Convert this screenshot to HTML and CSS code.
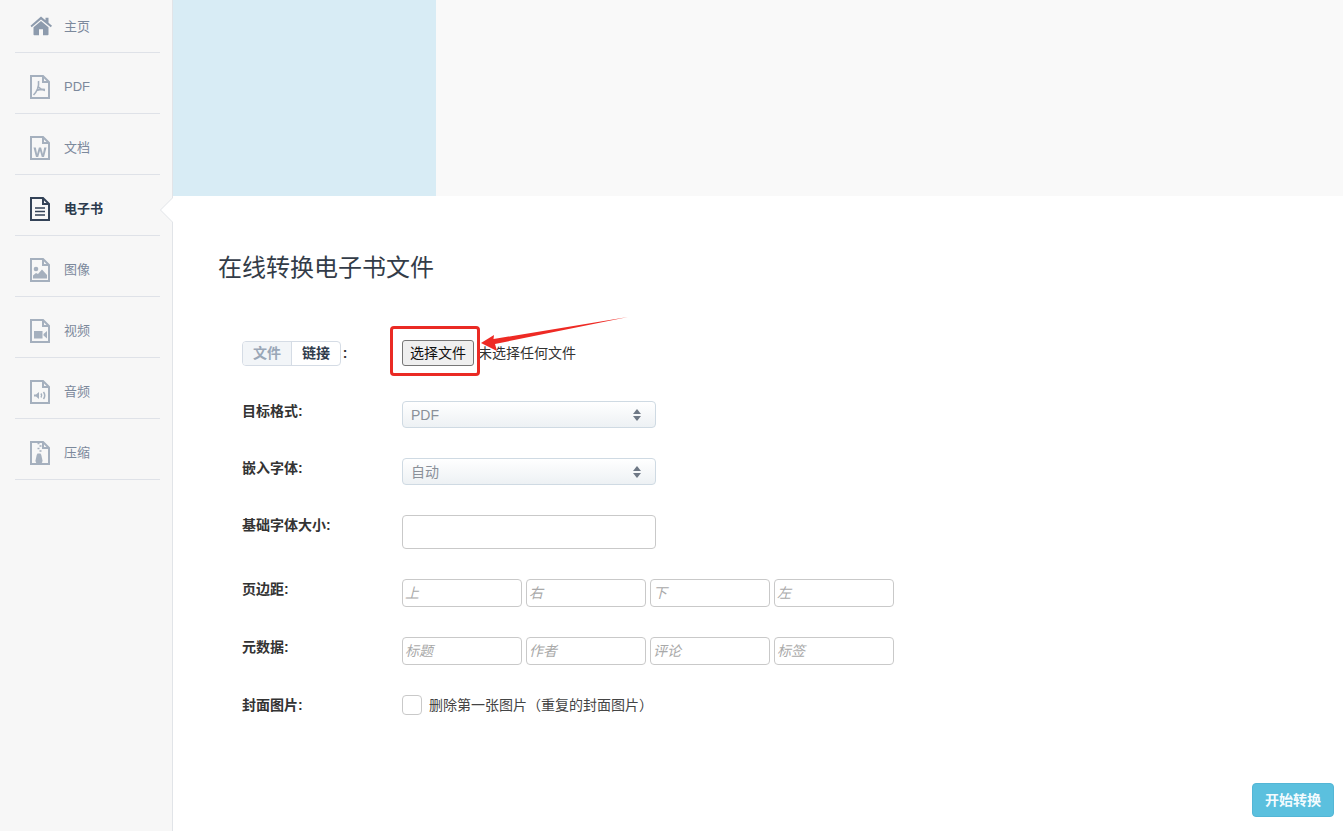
FILE: index.html
```html
<!DOCTYPE html>
<html lang="zh">
<head>
<meta charset="utf-8">
<title>在线转换电子书文件</title>
<link rel="stylesheet" href="styles.css">
</head>
<body>
<div class="app">
  <nav class="sidebar">
    <a class="nav-item nav-first">
      <svg class="nav-icon" viewBox="0 0 22 20" width="22" height="20"><path fill="currentColor" d="M11 0.500 L15.500 4.300V1.800h3v5l3.500 3-1.200 1.400L11 3.500 1.700 11.200 0.500 9.800z M11 5l7.500 6.200V18.500q0 .8-.8.8H13v-6H9v6H4.300q-.8 0-.8-.8V11.200z"/></svg>
      <span class="cjk">主页</span>
    </a>
    <a class="nav-item">
      <svg class="nav-icon" viewBox="0 0 20 24" width="20" height="24"><path class="doc" d="M1 1h12l6 6v16H1z M13 1v6h6"/><path class="line" d="M8.500 6c.5 3 0 5-1 8-1 2.500-2.500 4.500-4 6M8.500 12c1.500 2 3.500 3 6.500 3.500M6.500 15.500c3-1 5.500-1.300 8.500-1"/></svg>
      <span>PDF</span>
    </a>
    <a class="nav-item">
      <svg class="nav-icon" viewBox="0 0 20 24" width="20" height="24"><path class="doc" d="M1 1h12l6 6v16H1z M13 1v6h6"/><path class="fillp" d="M3.500 11.500h2.300l1.300 6.500 1.800-6.500h2.200l1.800 6.500 1.300-6.500h2.300l-2.500 9.500h-2.200l-1.800-6.200-1.800 6.200H6z"/></svg>
      <span class="cjk">文档</span>
    </a>
    <a class="nav-item nav-active">
      <svg class="nav-icon" viewBox="0 0 20 24" width="20" height="24"><path class="doc" d="M1 1h12l6 6v16H1z M13 1v6h6"/><path class="line" d="M5 11h10M5 14.500h10M5 18h10"/></svg>
      <span class="cjk">电子书</span>
    </a>
    <a class="nav-item">
      <svg class="nav-icon" viewBox="0 0 20 24" width="20" height="24"><path class="doc" d="M1 1h12l6 6v16H1z M13 1v6h6"/><circle class="fillp" cx="6" cy="11" r="2.300"/><path class="fillp" d="M3 20.500v-3l3-2.500 2 1 4-4.500 5 5.500v3.500z"/></svg>
      <span class="cjk">图像</span>
    </a>
    <a class="nav-item">
      <svg class="nav-icon" viewBox="0 0 20 24" width="20" height="24"><path class="doc" d="M1 1h12l6 6v16H1z M13 1v6h6"/><path class="fillp" d="M4 12h8.500v7.500H4z M13.500 15l3.500-3v7.500l-3.500-3z"/></svg>
      <span class="cjk">视频</span>
    </a>
    <a class="nav-item">
      <svg class="nav-icon" viewBox="0 0 20 24" width="20" height="24"><path class="doc" d="M1 1h12l6 6v16H1z M13 1v6h6"/><path class="fillp" d="M4 14.500h2l3-2.500v7l-3-2.500H4z"/><path class="thin" d="M11 13.500q1.500 2 0 4M13.500 12q2.500 3.500 0 7"/></svg>
      <span class="cjk">音频</span>
    </a>
    <a class="nav-item">
      <svg class="nav-icon" viewBox="0 0 20 24" width="20" height="24"><path class="doc" d="M1 1h12l6 6v16H1z M13 1v6h6"/><path class="thin" d="M7.500 2.500h2M9.500 5h2M7.500 7.500h2M9.500 10h2"/><path class="fillp" d="M7.500 12.500h3l.8 1.500 1.200 5.500a3.500 3.500 0 0 1-7 0l1.200-5.500z"/></svg>
      <span class="cjk">压缩</span>
    </a>
  </nav>

  <main class="content">
    <header class="banner"><div class="ad"></div></header>
    <section class="panel">
      <h1 class="title">在线转换电子书文件</h1>
      <form class="form">
        <div class="row row-file">
          <div class="label label-tabs">
            <div class="tabs"><span class="tab tab-on">文件</span><span class="tab">链接</span></div>
            <b class="colon">:</b>
          </div>
          <div class="file-field">
            <button type="button" class="file-btn">选择文件</button>
            <span class="file-none">未选择任何文件</span>
          </div>
        </div>
        <div class="row row-select">
          <div class="label">目标格式:</div>
          <div class="select"><span>PDF</span><i class="updown"></i></div>
        </div>
        <div class="row row-select2">
          <div class="label">嵌入字体:</div>
          <div class="select"><span class="cjk">自动</span><i class="updown"></i></div>
        </div>
        <div class="row row-size">
          <div class="label">基础字体大小:</div>
          <input class="text-input" type="text">
        </div>
        <div class="row row-quad">
          <div class="label">页边距:</div>
          <div class="quad">
            <input class="small-input" placeholder="上"><input class="small-input" placeholder="右"><input class="small-input" placeholder="下"><input class="small-input" placeholder="左">
          </div>
        </div>
        <div class="row row-quad2">
          <div class="label">元数据:</div>
          <div class="quad">
            <input class="small-input" placeholder="标题"><input class="small-input" placeholder="作者"><input class="small-input" placeholder="评论"><input class="small-input" placeholder="标签">
          </div>
        </div>
        <div class="row row-check">
          <div class="label">封面图片:</div>
          <label class="check"><i class="box"></i><span class="cjk">删除第一张图片（重复的封面图片）</span></label>
        </div>
      </form>
      <button type="button" class="start">开始转换</button>
      <div class="mark-box"></div>
      <svg class="mark-arrow" width="160" height="50" viewBox="0 0 160 50"><path fill="#ee2a24" d="M0 26 L13 18 L12.500 22 L147 0 L14 27 L16 34z"/></svg>
    </section>
  </main>
</div>
</body>
</html>
```

FILE: styles.css
```css
* { box-sizing: border-box; }
html, body { margin: 0; height: 100%; }
body {
  font-family: "Liberation Sans", "Noto Sans CJK SC", sans-serif;
  font-size: 14px;
  color: #2f3b4b;
  background: #fff;
  overflow: hidden;
}
.app { display: flex; height: 831px; }
.cjk { margin-bottom: 2px; }

.sidebar {
  width: 173px;
  flex: none;
  background: #f7f7f7;
  border-right: 1px solid #e1e4e8;
  padding: 0 12px 0 15px;
  font-size: 13px;
}
.nav-item {
  display: flex;
  align-items: center;
  height: 61px;
  padding: 7px 0 0 15px;
  border-bottom: 1px solid #dfe2e8;
  color: #7c899c;
  gap: 14px;
}
.nav-first { height: 53px; padding-top: 0; padding-left: 15px; gap: 12px; }
.nav-icon { flex: none; color: #a5b0be; }
.nav-active { color: #2c3a4d; font-weight: 700; }
.nav-active .nav-icon { color: #334257; }
.nav-first .nav-icon { color: #8d9bad; }
.doc { fill: none; stroke: currentColor; stroke-width: 2; }
.line { fill: none; stroke: currentColor; stroke-width: 1.6; }
.thin { fill: none; stroke: currentColor; stroke-width: 1.5; }
.fillp { fill: currentColor; }

.content { flex: 1; min-width: 0; display: flex; flex-direction: column; }
.banner { height: 196px; flex: none; background: #f9f9f9; }
.ad { width: 263px; height: 100%; background: #d8ecf5; }

.panel { position: relative; flex: 1; padding: 53px 0 0 45px; }
.panel::before, .panel::after {
  content: "";
  position: absolute;
  top: 2px;
  width: 12px;
  height: 24px;
  clip-path: polygon(0 50%, 100% 0, 100% 100%);
}
.panel::before { left: -13px; background: #e1e4e8; }
.panel::after { left: -12px; background: #fff; }
.title { margin: 0; font-size: 24px; font-weight: 400; line-height: 38px; color: #333c48; }

.form { margin-top: 53px; padding-left: 24px; display: flex; flex-direction: column; }
.row { display: grid; grid-template-columns: 160px auto; justify-content: start; }
.label { font-weight: 700; font-size: 14px; line-height: 20px; color: #333; }

.row-file { height: 61px; align-items: start; }
.label-tabs { display: flex; align-items: center; gap: 0; height: 26px; }
.tabs {
  display: flex;
  height: 25px;
  margin-top: 1px;
  border: 1px solid #d5dce5;
  border-radius: 4px;
  overflow: hidden;
}
.tab { width: 48px; text-align: center; line-height: 22px; color: #2f3b4b; font-weight: 700; }
.tab-on { width: 49px; background: #f2f5f8; color: #9aa7b7; border-right: 1px solid #d5dce5; }
.colon { width: 8px; text-align: center; }
.file-field { display: flex; align-items: center; gap: 4px; height: 26px; }
.file-btn {
  width: 72px;
  height: 26px;
  padding: 0 0 2px;
  font: 14px "Liberation Sans", "Noto Sans CJK SC", sans-serif;
  color: #111;
  background: #efefef;
  border: 1px solid #767676;
  border-radius: 3px;
}
.file-none { color: #333; margin-bottom: 2px; }

.row-select, .row-select2 { height: 57px; align-items: start; }
.select {
  width: 254px;
  height: 27px;
  display: flex;
  align-items: center;
  justify-content: space-between;
  padding: 0 14px 0 8px;
  border: 1px solid #cfdae3;
  border-radius: 4px;
  background: linear-gradient(#fff, #edf1f4);
  color: #8a9099;
  font-size: 14px;
}
.updown {
  position: relative;
  width: 8px;
  height: 12px;
}
.updown::before, .updown::after {
  content: "";
  position: absolute;
  left: 0;
  border-left: 4px solid transparent;
  border-right: 4px solid transparent;
}
.updown::before { top: 0; border-bottom: 5px solid #6e7885; }
.updown::after { bottom: 0; border-top: 5px solid #6e7885; }

.row-size { height: 64px; align-items: start; }
.text-input { width: 254px; height: 34px; border: 1px solid #c9c9c9; border-radius: 4px; outline: none; padding: 0 8px; }

.row-quad, .row-quad2 { height: 58px; align-items: start; }
.quad { display: flex; gap: 4px; }
.small-input {
  width: 120px;
  height: 28px;
  padding: 0 2px;
  border: 1px solid #c9c9c9;
  border-radius: 4px;
  outline: none;
  font: italic 14px "Liberation Sans", "Noto Sans CJK SC", sans-serif;
}
.small-input::placeholder { color: #a9a9a9; opacity: 1; }

.row-check { height: 30px; align-items: start; }
.check { display: flex; align-items: center; gap: 7px; height: 20px; color: #444; }
.box { width: 20px; height: 20px; border: 1px solid #c9c9c9; border-radius: 4px; background: #fff; }

.start {
  position: absolute;
  right: 9px;
  bottom: 14px;
  width: 82px;
  height: 34px;
  padding: 0 0 2px;
  color: #f3fbfe;
  background: #5bc0de;
  border: 1px solid #53b6d6;
  border-radius: 4px;
  font: 700 14px "Liberation Sans", "Noto Sans CJK SC", sans-serif;
}
.mark-box {
  position: absolute;
  left: 217px;
  top: 130px;
  width: 90px;
  height: 50px;
  border: 3px solid #ea2a24;
  border-radius: 4px;
}
.mark-arrow { position: absolute; left: 308px; top: 121px; }
```
